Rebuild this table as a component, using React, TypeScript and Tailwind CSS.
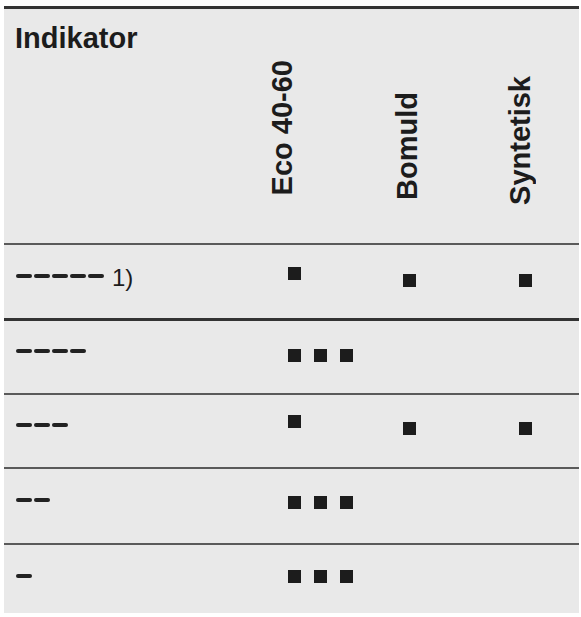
import React from "react";

const font = { fontFamily: '"Liberation Sans", Arial, Helvetica, sans-serif' };

function Dashes({ n }: { n: number }) {
  return (
    <div className="flex gap-[2px]">
      {Array.from({ length: n }).map((_, i) => (
        <div key={i} className="w-[16px] h-[4px] rounded-full bg-[#222]" />
      ))}
    </div>
  );
}

function Sq() {
  return <div className="w-[13px] h-[13px] bg-[#1c1c1c]" />;
}

function Three() {
  return (
    <div className="flex gap-[13px]">
      <Sq />
      <Sq />
      <Sq />
    </div>
  );
}

export default function App() {
  return (
    <div className="w-[581px] h-[617px] bg-white pt-[6px] pl-[4px] text-[#1c1c1c]" style={font}>
      <div className="w-[575px] h-[607px] bg-[#e9e9e9] border-t-[3px] border-[#333] flex flex-col">
        {/* Header */}
        <div className="h-[236px] flex items-end border-b-[2px] border-[#5a5a5a] shrink-0">
          <div className="w-[264px] self-start pt-[15px] pl-[11px]">
            <div className="text-[29px] leading-none font-bold">Indikator</div>
          </div>
          <div className="mb-[48px] text-[29px] leading-none font-bold [writing-mode:vertical-rl] rotate-180 whitespace-nowrap">
            Eco 40-60
          </div>
          <div className="ml-[96px] mb-[43px] text-[29px] leading-none font-bold [writing-mode:vertical-rl] rotate-180 whitespace-nowrap">
            Bomuld
          </div>
          <div className="ml-[84px] mb-[38px] text-[29px] leading-none font-bold [writing-mode:vertical-rl] rotate-180 whitespace-nowrap">
            Syntetisk
          </div>
        </div>

        {/* Row 1 */}
        <div className="h-[76px] flex items-start border-b-[3px] border-[#333] shrink-0">
          <div className="w-[284px] flex items-start pl-[12px]">
            <div className="mt-[29px]">
              <Dashes n={5} />
            </div>
            <div className="ml-[8px] mt-[21px] text-[24px] leading-none">1)</div>
          </div>
          <div className="w-[115px] pt-[22px]">
            <Sq />
          </div>
          <div className="w-[116px] pt-[29px]">
            <Sq />
          </div>
          <div className="pt-[29px]">
            <Sq />
          </div>
        </div>

        {/* Row 2 */}
        <div className="h-[74px] flex items-start border-b-[2px] border-[#5a5a5a] shrink-0">
          <div className="w-[284px] pl-[12px] pt-[28px]">
            <Dashes n={4} />
          </div>
          <div className="pt-[28px]">
            <Three />
          </div>
        </div>

        {/* Row 3 */}
        <div className="h-[74px] flex items-start border-b-[2px] border-[#5a5a5a] shrink-0">
          <div className="w-[284px] pl-[12px] pt-[28px]">
            <Dashes n={3} />
          </div>
          <div className="w-[115px] pt-[20px]">
            <Sq />
          </div>
          <div className="w-[116px] pt-[27px]">
            <Sq />
          </div>
          <div className="pt-[27px]">
            <Sq />
          </div>
        </div>

        {/* Row 4 */}
        <div className="h-[76px] flex items-start border-b-[2px] border-[#5a5a5a] shrink-0">
          <div className="w-[284px] pl-[12px] pt-[29px]">
            <Dashes n={2} />
          </div>
          <div className="pt-[27px]">
            <Three />
          </div>
        </div>

        {/* Row 5 */}
        <div className="flex-1 flex items-start">
          <div className="w-[284px] pl-[12px] pt-[29px]">
            <Dashes n={1} />
          </div>
          <div className="pt-[25px]">
            <Three />
          </div>
        </div>
      </div>
    </div>
  );
}
